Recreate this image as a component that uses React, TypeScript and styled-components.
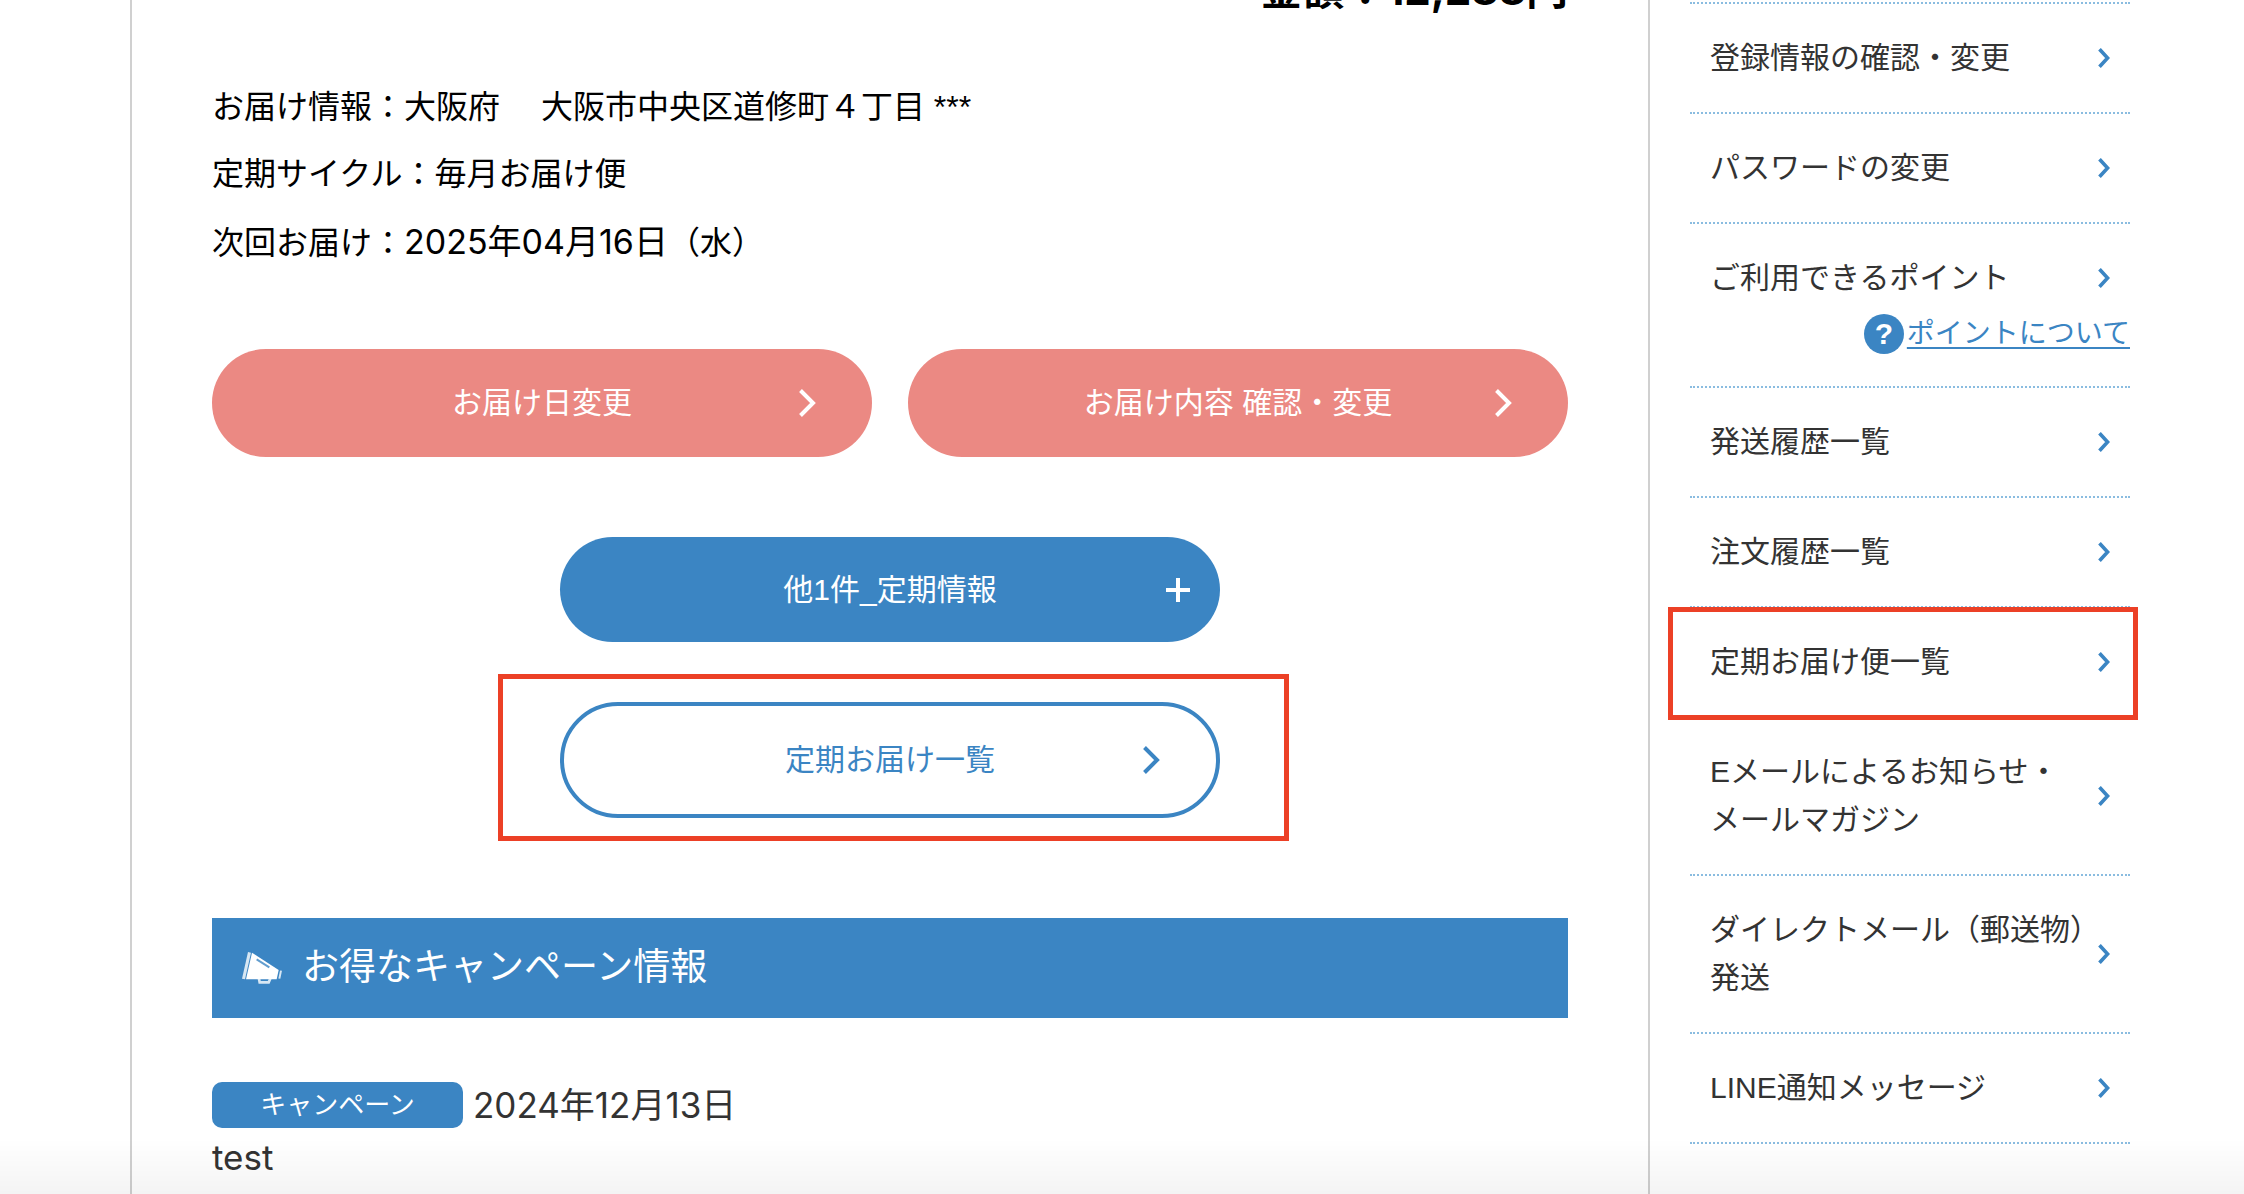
import React from "react";
import styled, { createGlobalStyle, css } from "styled-components";

const color = {
  blue: "#3b85c3",
  pink: "#eb8983",
  dotted: "#8abce0",
  rule: "#d0d0d0",
  mark: "#ec4026",
  text: "#333333",
};

const GlobalStyle = createGlobalStyle`
  *, *::before, *::after { box-sizing: border-box; }
  body {
    margin: 0;
    background: #fff;
    color: ${color.text};
    font-family: "Liberation Sans", "Noto Sans CJK JP", sans-serif;
    font-size: 30px;
    line-height: 48px;
  }
  a { color: inherit; text-decoration: none; }
  p, h2, ul { margin: 0; padding: 0; }
  ul { list-style: none; }
`;

const Page = styled.div`
  display: flex;
  gap: 40px;
  min-height: 100vh;
  padding: 0 114px 0 130px;
`;

const Main = styled.main`
  flex: 1;
  min-width: 0;
  padding: 0 80px;
  border: solid ${color.rule};
  border-width: 0 2px;
`;

const Amount = styled.p`
  margin-top: -40px;
  color: #000;
  font-family: Inter, "Noto Sans CJK JP", sans-serif;
  font-size: 42px;
  font-weight: 700;
  line-height: 60px;
  text-align: right;
`;

const Info = styled.div`
  margin-top: 54px;
  color: #000;
  font-size: 32px;
  line-height: 67px;
`;

const DateText = styled.time`
  font-family: Inter, "Noto Sans CJK JP", sans-serif;
  font-size: 34px;
`;

const ButtonPair = styled.div`
  display: grid;
  grid-template-columns: 1fr 1fr;
  gap: 36px;
  margin-top: 72px;
`;

const pill = css`
  position: relative;
  display: flex;
  align-items: center;
  justify-content: center;
  width: 100%;
  border-radius: 58px;
  color: #fff;
  font: inherit;
`;

const PinkLink = styled.a`
  ${pill}
  height: 108px;
  background: ${color.pink};
`;

const Stack = styled.div`
  display: flex;
  flex-direction: column;
  gap: 60px;
  width: 660px;
  max-width: 100%;
  margin: 80px auto 0;
`;

const MoreButton = styled.button`
  ${pill}
  height: 105px;
  padding: 0;
  border: 0;
  background: ${color.blue};
  cursor: pointer;
`;

const OutlineLink = styled.a`
  ${pill}
  height: 116px;
  border: 4px solid ${color.blue};
  background: #fff;
  color: ${color.blue};
`;

const PillIcon = styled.svg<{ $right: number }>`
  position: absolute;
  top: 50%;
  right: ${(p) => p.$right}px;
  transform: translateY(-50%);
`;

const Marked = styled.div`
  position: relative;
`;

const Mark = styled.span<{ $inset: string }>`
  position: absolute;
  inset: ${(p) => p.$inset};
  z-index: 1;
  border: 5px solid ${color.mark};
  pointer-events: none;
`;

const Heading = styled.h2`
  display: flex;
  align-items: center;
  gap: 20px;
  height: 100px;
  margin-top: 100px;
  padding: 0 30px;
  background: ${color.blue};
  color: #fff;
  font-size: 37px;
  font-weight: 400;
`;

const News = styled.article`
  margin-top: 64px;
`;

const NewsHead = styled.div`
  display: flex;
  align-items: center;
  gap: 10px;
  height: 46px;
`;

const Badge = styled.span`
  width: 251px;
  border-radius: 10px;
  background: ${color.blue};
  color: #fff;
  font-size: 26px;
  line-height: 46px;
  text-align: center;
`;

const NewsDate = styled(DateText)`
  font-size: 35px;
`;

const NewsBody = styled.p`
  font-family: Inter, "Noto Sans CJK JP", sans-serif;
  font-size: 35px;
  line-height: 58px;
`;

const Side = styled.nav`
  flex: 0 0 440px;
  min-width: 0;
  padding-top: 2px;
`;

const Menu = styled.ul`
  border-top: 2px dotted ${color.dotted};
`;

const Item = styled.li`
  position: relative;
  border-bottom: 2px dotted ${color.dotted};
`;

const ItemLink = styled.a`
  display: flex;
  align-items: center;
  padding: 30px 20px;
`;

const ItemText = styled.span`
  flex: 1;
  min-width: 0;
  white-space: nowrap;
`;

const HelpRow = styled.div`
  display: flex;
  justify-content: flex-end;
  margin-top: -22px;
  padding-bottom: 28px;
`;

const HelpLink = styled.a`
  display: flex;
  align-items: center;
  gap: 3px;
  color: ${color.blue};
  font-size: 28px;
`;

const HelpMark = styled.span`
  width: 40px;
  border-radius: 50%;
  background: ${color.blue};
  color: #fff;
  font-size: 30px;
  font-weight: 700;
  line-height: 40px;
  text-align: center;
`;

const HelpText = styled.span`
  text-decoration: underline;
  text-decoration-thickness: 2px;
  text-underline-offset: 4px;
`;

const BottomShade = styled.div`
  position: fixed;
  inset: auto 0 0 0;
  z-index: 2;
  height: 56px;
  background: linear-gradient(rgba(0, 0, 0, 0), rgba(0, 0, 0, 0.045));
  pointer-events: none;
`;

const BigChevron = ({ right }: { right: number }) => (
  <PillIcon $right={right} width="17" height="28" viewBox="0 0 17 28" fill="none" stroke="currentColor" strokeWidth="4" aria-hidden="true">
    <path d="M1.5 1.5 14 14 1.5 26.5" />
  </PillIcon>
);

const SmallChevron = () => (
  <svg width="12" height="20" viewBox="0 0 12 20" fill="none" stroke={color.blue} strokeWidth="3.6" aria-hidden="true">
    <path d="M1.5 1.2 9.6 10 1.5 18.8" />
  </svg>
);

const Megaphone = () => (
  <svg width="40" height="32" viewBox="0 0 120 96" fill="#fff" aria-hidden="true">
    <path d="M18 0 27 2 9 82 0 80Z" opacity="0.8" />
    <path d="M30 2 110 54 104 82 12 82Z" />
    <path d="M44 22 82 46" stroke={color.blue} strokeWidth="6" opacity="0.8" />
    <path d="M51 80 53 91H80L85 80" fill="none" stroke="#fff" strokeWidth="8" opacity="0.8" />
    <path d="M117 56 112 80" stroke="#fff" strokeWidth="6" opacity="0.8" />
  </svg>
);

type MenuEntry = { lines: string[]; help?: string; marked?: boolean };

const menu: MenuEntry[] = [
  { lines: ["登録情報の確認・変更"] },
  { lines: ["パスワードの変更"] },
  { lines: ["ご利用できるポイント"], help: "ポイントについて" },
  { lines: ["発送履歴一覧"] },
  { lines: ["注文履歴一覧"] },
  { lines: ["定期お届け便一覧"], marked: true },
  { lines: ["Eメールによるお知らせ・", "メールマガジン"] },
  { lines: ["ダイレクトメール（郵送物）", "発送"] },
  { lines: ["LINE通知メッセージ"] },
];

export default function App() {
  return (
    <>
      <GlobalStyle />
      <Page lang="ja">
        <Main>
          <Amount>金額：12,288円</Amount>
          <Info>
            <p>お届け情報：大阪府　 大阪市中央区道修町４丁目 ***</p>
            <p>定期サイクル：毎月お届け便</p>
            <p>
              次回お届け：<DateText>2025年04月16日</DateText>（水）
            </p>
          </Info>
          <ButtonPair>
            <PinkLink href="#date">
              お届け日変更
              <BigChevron right={56} />
            </PinkLink>
            <PinkLink href="#contents">
              お届け内容 確認・変更
              <BigChevron right={56} />
            </PinkLink>
          </ButtonPair>
          <Stack>
            <MoreButton type="button">
              他1件_定期情報
              <PillIcon $right={30} width="24" height="24" viewBox="0 0 24 24" stroke="currentColor" strokeWidth="4" aria-hidden="true">
                <path d="M12 0V24M0 12H24" />
              </PillIcon>
            </MoreButton>
            <Marked>
              <OutlineLink href="#list">
                定期お届け一覧
                <BigChevron right={56} />
              </OutlineLink>
              <Mark $inset="-28px -69px -23px -62px" />
            </Marked>
          </Stack>
          <Heading>
            <Megaphone />
            お得なキャンペーン情報
          </Heading>
          <News>
            <NewsHead>
              <Badge>キャンペーン</Badge>
              <NewsDate>2024年12月13日</NewsDate>
            </NewsHead>
            <NewsBody>test</NewsBody>
          </News>
        </Main>
        <Side>
          <Menu>
            {menu.map((entry) => (
              <Item key={entry.lines[0]}>
                <ItemLink href="#menu">
                  <ItemText>
                    {entry.lines.map((line, i) => (
                      <React.Fragment key={line}>
                        {i > 0 && <br />}
                        {line}
                      </React.Fragment>
                    ))}
                  </ItemText>
                  <SmallChevron />
                </ItemLink>
                {entry.help && (
                  <HelpRow>
                    <HelpLink href="#help">
                      <HelpMark>?</HelpMark>
                      <HelpText>{entry.help}</HelpText>
                    </HelpLink>
                  </HelpRow>
                )}
                {entry.marked && <Mark $inset="-1px -8px -4px -22px" />}
              </Item>
            ))}
          </Menu>
        </Side>
      </Page>
      <BottomShade />
    </>
  );
}
